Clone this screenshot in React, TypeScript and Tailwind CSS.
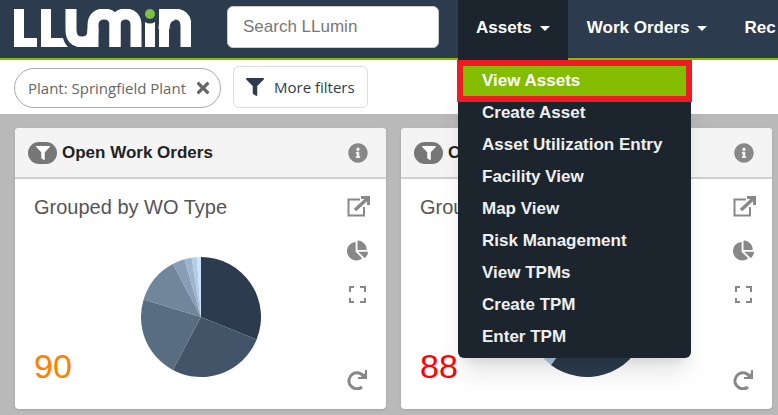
import type React from 'react'
import { FaChartPie, FaFilter, FaInfoCircle, FaTimes } from 'react-icons/fa'

interface Slice {
  color: string
  end: number
}

interface PieProps {
  slices: Slice[]
  label: string
}

const point = (deg: number) => {
  const rad = (deg * Math.PI) / 180
  return `${60 + 60 * Math.sin(rad)} ${60 - 60 * Math.cos(rad)}`
}

const Pie: React.FC<PieProps> = ({ slices, label }) => (
  <svg viewBox="0 0 120 120" className="w-[120px] h-[120px]" role="img" aria-label={label}>
    {slices.map((slice, i) => {
      const start = i === 0 ? 0 : slices[i - 1].end
      const large = slice.end - start > 180 ? 1 : 0
      return (
        <path
          key={slice.end}
          d={`M60 60 L${point(start)} A60 60 0 ${large} 1 ${point(slice.end)} Z`}
          fill={slice.color}
        />
      )
    })}
  </svg>
)

const Logo = () => (
  <svg viewBox="0 0 177 38" className="w-[177px] h-[38px]" role="img" aria-label="LLumin">
    <g fill="#fff">
      <path d="M0 0h10v29h13v9H0z" />
      <path d="M27 0h10v29h12c1 4 3 7 5 9H27z" />
      <path d="M131 13q5 3 10 0v25h-10z" />
      <path d="M145 0h10v38h-10z" />
      <path d="M70 28h14v10H70z" />
    </g>
    <g fill="none" stroke="#fff" strokeWidth="11">
      <path d="M57 0v21c0 8 4 12 11 12s11-4 11-12v-5C79 9 83 5 90 5s11 4 11 11v22" />
      <path d="M79 20v18" />
      <path d="M101 38V16c0-7 4-11 10.500-11S122 9 122 16v22" />
      <path d="M145 5h15c8 0 12 4 12 12v21" />
      <path d="M150 20c0-8 3-12 9-14" />
    </g>
    <circle cx="136" cy="5" r="5" fill="#7ac143" />
  </svg>
)

const OpenIcon = () => (
  <svg viewBox="0 0 24 21" className="w-6 h-[21px]" fill="none" stroke="currentColor" strokeWidth="2">
    <path d="M13 3.500H1.500V19.500H17V11" />
    <path d="M8 14L20 3" strokeWidth="3.500" />
    <path d="M14 0h9v9h-3V3h-6z" fill="currentColor" stroke="none" />
  </svg>
)

const ExpandIcon = () => (
  <svg viewBox="0 0 20 20" className="w-5 h-5" fill="none" stroke="currentColor" strokeWidth="2">
    <path d="M3 7V2h4M13 2h5v5M18 13v4h-5M7 17H3v-4" />
  </svg>
)

const ReloadIcon = () => (
  <svg viewBox="0 0 20 20" className="w-5 h-5" fill="none" stroke="currentColor" strokeWidth="3">
    <path d="M17 7A8 8 0 1 0 15 17" />
    <path d="M11 8h8V0" strokeWidth="2" />
    <path d="M18 3v5h-5z" fill="currentColor" stroke="none" />
  </svg>
)

interface CardProps {
  title: string
  subtitle: string
  count: number
  countClass: string
  slices: Slice[]
}

const Card: React.FC<CardProps> = ({ title, subtitle, count, countClass, slices }) => (
  <section className="flex-1 min-w-0 bg-white rounded shadow-sm text-[#888]">
    <header className="flex items-center h-[51px] pl-[13px] pr-[18px] bg-[#f4f4f4] border-b-2 border-[#d0d0d0] rounded-t">
      <span className="flex items-center justify-center w-[29px] h-[22px] mr-[5px] bg-[#777] rounded-full text-white text-sm">
        <FaFilter />
      </span>
      <h2 className="flex-1 text-[17px] font-bold text-[#222] whitespace-nowrap">{title}</h2>
      <button aria-label="Information" className="text-xl">
        <FaInfoCircle />
      </button>
    </header>
    <div className="grid grid-cols-[1fr_120px_1fr] h-[230px]">
      <div className="flex flex-col justify-between min-w-0 pt-3.5 pb-[25px] pl-[19px]">
        <p className="text-xl leading-7 text-[#555] whitespace-nowrap">{subtitle}</p>
        <p className={`text-[34px] leading-9 ${countClass}`}>{count}</p>
      </div>
      <div className="pt-[78px]">
        <Pie slices={slices} label={`${title} ${subtitle}`} />
      </div>
      <div className="flex justify-end min-w-0 pt-[17px] pr-[15px] pb-[19px]">
        <div className="flex flex-col items-start">
          <button aria-label="Open"><OpenIcon /></button>
          <button aria-label="Chart" className="mt-[23px] text-[21px]"><FaChartPie /></button>
          <button aria-label="Expand" className="mt-6"><ExpandIcon /></button>
          <button aria-label="Reload" className="mt-auto"><ReloadIcon /></button>
        </div>
      </div>
    </div>
  </section>
)

const menuItems = [
  'View Assets',
  'Create Asset',
  'Asset Utilization Entry',
  'Facility View',
  'Map View',
  'Risk Management',
  'View TPMs',
  'Create TPM',
  'Enter TPM',
]

const openSlices: Slice[] = [
  { color: '#2c3c4e', end: 112 },
  { color: '#425468', end: 208 },
  { color: '#586d82', end: 287 },
  { color: '#70869b', end: 332 },
  { color: '#869db5', end: 344 },
  { color: '#9db4cd', end: 351 },
  { color: '#b4cbe6', end: 356 },
  { color: '#cbe3fd', end: 360 },
]

const otherSlices: Slice[] = [
  { color: '#2c3c4e', end: 217 },
  { color: '#b4cbe6', end: 360 },
]

const Caret = () => (
  <span className="border-x-[5px] border-t-[5px] border-x-transparent border-t-current" />
)

export default function App() {
  return (
    <div className="min-h-screen overflow-hidden bg-[#b9b9b9] font-['Liberation_Sans',Arial,sans-serif]">
      <header className="flex h-15 bg-[#2c3c4e] border-b-2 border-[#84bd00] text-white text-[17px] font-bold">
        <a href="#" className="pt-[9px] pl-3.5 shrink-0"><Logo /></a>
        <input
          type="text"
          aria-label="Search LLumin"
          placeholder="Search LLumin"
          className="w-[212px] h-[42px] mt-1.5 ml-9 px-[15px] shrink-0 bg-white border border-[#ccc] rounded-md text-[17px] font-normal text-[#555] placeholder:text-[#777]"
        />
        <nav className="flex ml-[19px]">
          <div className="relative">
            <button aria-expanded="true" className="flex items-center gap-2 h-15 px-[18px] pb-1 bg-[#1c252e]">
              Assets <Caret />
            </button>
            <ul className="absolute top-15 left-0 z-10 w-[233px] pt-1 pb-1.5 bg-[#1c252e] rounded-b-md shadow-xl">
              {menuItems.map((item, i) => (
                <li key={item} className="relative">
                  <a
                    href="#"
                    className={i === 0
                      ? 'block h-8 pl-6 leading-[34px] bg-[#84bd00]'
                      : 'block h-8 pl-6 leading-[34px] text-[#f0f0f0]'}
                  >
                    {item}
                  </a>
                  {i === 0 && (
                    <span className="absolute -top-1 -bottom-1.5 -inset-x-px z-10 border-[6px] border-[#ed1c24] pointer-events-none" />
                  )}
                </li>
              ))}
            </ul>
          </div>
          <button className="flex items-center gap-2 px-[19px] pb-0.5 whitespace-nowrap">
            Work Orders <Caret />
          </button>
          <button className="pl-[18px] pb-0.5 whitespace-nowrap">Rec</button>
        </nav>
      </header>
      <div className="flex items-start h-[54px] pl-3.5 bg-white font-['Open_Sans',sans-serif] text-[15px]">
        <div className="flex items-center gap-2 h-10 mt-2 pl-[13px] pr-2 border border-[#aaa] rounded-full text-[#666]">
          Plant: Springfield Plant
          <button aria-label="Remove filter" className="text-lg"><FaTimes /></button>
        </div>
        <button className="flex items-center gap-2.5 h-[42px] mt-1.5 ml-3 px-3 border border-[#ddd] rounded-md text-[#2c3c4e]">
          <FaFilter className="text-lg" />
          More filters
        </button>
      </div>
      <main className="flex gap-[15px] pt-3.5 pr-1.5 pb-1.5 pl-[15px]">
        <Card title="Open Work Orders" subtitle="Grouped by WO Type" count={90} countClass="text-[#ff8000]" slices={openSlices} />
        <Card title="Open Work Orders" subtitle="Grouped by WO Type" count={88} countClass="text-[#ff0000]" slices={otherSlices} />
      </main>
    </div>
  )
}
